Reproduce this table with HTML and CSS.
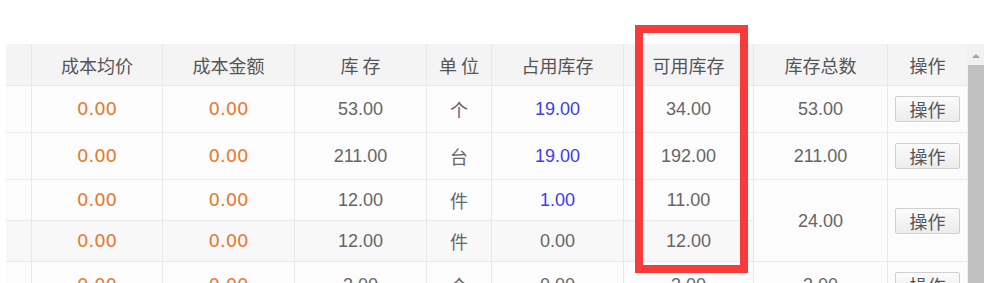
FILE: index.html
```html
<!DOCTYPE html>
<html lang="zh-CN">
<head>
<meta charset="utf-8">
<title>库存列表</title>
<link rel="stylesheet" href="styles.css">
</head>
<body>
<div class="page">
  <div class="frame">
    <table class="grid">
      <colgroup>
        <col class="c0"><col class="c1"><col class="c2"><col class="c3"><col class="c4"><col class="c5"><col class="c6"><col class="c7"><col class="c8">
      </colgroup>
      <thead>
        <tr class="head">
          <th></th><th>成本均价</th><th>成本金额</th><th>库 存</th><th>单 位</th><th>占用库存</th><th>可用库存</th><th>库存总数</th><th class="last">操作</th>
        </tr>
      </thead>
      <tbody>
        <tr class="tall">
          <td></td><td class="money">0.00</td><td class="money">0.00</td><td class="num">53.00</td><td class="cjk">个</td><td class="num blue">19.00</td><td class="num">34.00</td><td class="num">53.00</td><td class="last"><button class="btn">操作</button></td>
        </tr>
        <tr class="tall">
          <td></td><td class="money">0.00</td><td class="money">0.00</td><td class="num">211.00</td><td class="cjk">台</td><td class="num blue">19.00</td><td class="num">192.00</td><td class="num">211.00</td><td class="last"><button class="btn">操作</button></td>
        </tr>
        <tr class="short">
          <td></td><td class="money">0.00</td><td class="money">0.00</td><td class="num">12.00</td><td class="cjk">件</td><td class="num blue">1.00</td><td class="num">11.00</td><td class="num" rowspan="2">24.00</td><td class="last" rowspan="2"><button class="btn">操作</button></td>
        </tr>
        <tr class="short">
          <td></td><td class="money">0.00</td><td class="money">0.00</td><td class="num">12.00</td><td class="cjk">件</td><td class="num">0.00</td><td class="num">12.00</td>
        </tr>
        <tr class="tall">
          <td></td><td class="money">0.00</td><td class="money">0.00</td><td class="num">3.00</td><td class="cjk">个</td><td class="num">0.00</td><td class="num">3.00</td><td class="num">3.00</td><td class="last"><button class="btn">操作</button></td>
        </tr>
      </tbody>
    </table>
    <div class="scrollbar">
      <div class="arrow"></div>
      <div class="thumb"></div>
    </div>
  </div>
  <div class="highlight"></div>
</div>
</body>
</html>
```
FILE: styles.css
```css
html, body {
  margin: 0;
  padding: 0;
  background: #ffffff;
}
body {
  width: 984px;
  height: 283px;
  overflow: hidden;
  font-family: "Noto Sans CJK SC", "Liberation Sans", sans-serif;
}
.page {
  position: relative;
  padding: 44px 0 0 6px;
}
.frame {
  display: flex;
  align-items: flex-start;
}
.grid {
  width: 961px;
  table-layout: fixed;
  border-collapse: separate;
  border-spacing: 0;
  flex: none;
}
.c0 { width: 26px; }
.c1 { width: 131px; }
.c2 { width: 132px; }
.c3 { width: 132px; }
.c4 { width: 65px; }
.c5 { width: 132px; }
.c6 { width: 130px; }
.c7 { width: 134px; }
.c8 { width: 79px; }
.grid th, .grid td {
  box-sizing: border-box;
  padding: 0;
  text-align: center;
  vertical-align: middle;
  border-right: 1px solid #e9e9e9;
  border-bottom: 1px solid #e9e9e9;
  overflow: hidden;
  white-space: nowrap;
}
.grid .last {
  border-right: none;
}
.head th {
  height: 42px;
  background: #f4f4f4;
  font-family: "Noto Sans CJK SC", sans-serif;
  font-weight: normal;
  font-size: 18px;
  color: #555555;
  line-height: 20px;
}
.grid td {
  background: #fcfcfc;
  color: #666666;
  font-size: 18px;
  line-height: 20px;
}
.tall td { height: 47px; }
.short td { height: 41px; }
.short + .short td { background: #f8f8f8; }
.money {
  font-family: "DejaVu Sans", sans-serif;
  color: #e8792f !important;
  font-size: 18px;
}
.num {
  font-family: "Liberation Sans", sans-serif;
}
.blue {
  color: #3c3cf2 !important;
}
.cjk {
  font-family: "Noto Sans CJK SC", sans-serif;
}
.btn {
  display: inline-block;
  width: 65px;
  height: 26px;
  padding: 0;
  margin: 0;
  border: 1px solid #cfcfcf;
  border-radius: 2px;
  background: linear-gradient(#fbfbfb, #ececec);
  font-family: "Noto Sans CJK SC", sans-serif;
  font-size: 18px;
  line-height: 22px;
  color: #555555;
  vertical-align: middle;
}
.scrollbar {
  flex: none;
  width: 17px;
  height: 260px;
  background: #f1f1f1;
  display: flex;
  flex-direction: column;
  align-items: center;
}
.arrow {
  margin-top: 10px;
  width: 0;
  height: 0;
  border-left: 4px solid transparent;
  border-right: 4px solid transparent;
  border-bottom: 4px solid #a3a3a3;
}
.thumb {
  margin-top: 7px;
  align-self: stretch;
  margin-left: 1px;
  flex: 1;
  background: #c1c1c1;
}
.highlight {
  position: absolute;
  left: 635px;
  top: 25px;
  width: 113px;
  height: 248px;
  box-sizing: border-box;
  border: 8px solid #f93a3a;
}
```
